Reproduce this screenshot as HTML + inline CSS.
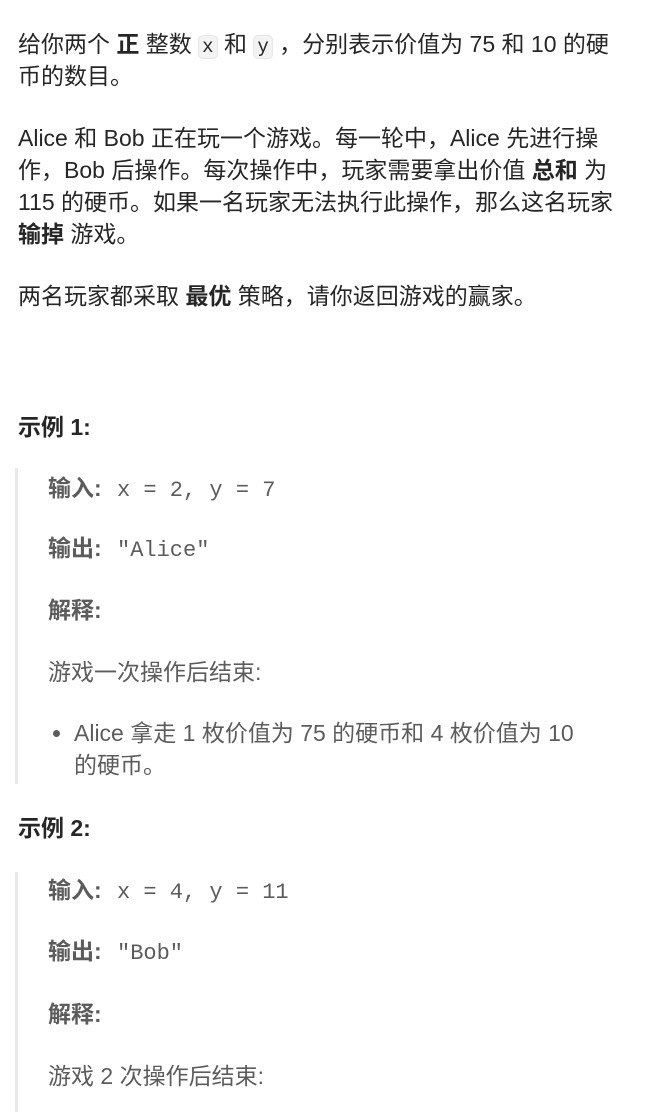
<!DOCTYPE html>
<html><head><meta charset="utf-8"><style>
html,body{margin:0;padding:0;background:#fff;width:648px;height:1112px;overflow:hidden}
body{position:relative;font-family:"Liberation Sans","Noto Sans CJK SC",sans-serif;font-size:23px;color:#262626}
.l{position:absolute;left:18px;line-height:32px;height:32px;white-space:nowrap}
.q{left:48px;color:#5c5c5c}
b{font-weight:700;color:#262626}
.q b{color:#5c5c5c}
.lab{display:inline-block;width:69px}
.m{font-family:"Liberation Mono","DejaVu Sans Mono",monospace;font-size:22px}
code{font-family:"Liberation Mono",monospace;font-size:19px;background:#f3f3f3;border:1px solid #e6e6e6;border-radius:5px;padding:0 3px}
.bar{position:absolute;left:15px;width:3px;background:#e8e8e8}
.dot{position:absolute;left:53px;width:7px;height:7px;border-radius:50%;background:#5c5c5c}
</style></head><body>
<div class="l" style="top:28px">给你两个 <b>正</b> 整数 <code>x</code> 和 <code>y</code> ，分别表示价值为 75 和 10 的硬</div>
<div class="l" style="top:60px">币的数目。</div>
<div class="l" style="top:122px">Alice 和 Bob 正在玩一个游戏。每一轮中，Alice 先进行操</div>
<div class="l" style="top:154px">作，Bob 后操作。每次操作中，玩家需要拿出价值 <b>总和</b> 为</div>
<div class="l" style="top:186px">115 的硬币。如果一名玩家无法执行此操作，那么这名玩家</div>
<div class="l" style="top:218px"><b>输掉</b> 游戏。</div>
<div class="l" style="top:280px">两名玩家都采取 <b>最优</b> 策略，请你返回游戏的赢家。</div>
<div class="l" style="top:411px"><b>示例 1:</b></div>
<div class="bar" style="top:468px;height:316px"></div>
<div class="l q" style="top:472px"><b class="lab">输入:</b><span class="m">x = 2, y = 7</span></div>
<div class="l q" style="top:532px"><b class="lab">输出:</b><span class="m">"Alice"</span></div>
<div class="l q" style="top:594px"><b>解释:</b></div>
<div class="l q" style="top:656px">游戏一次操作后结束:</div>
<div class="dot" style="top:730px"></div>
<div class="l q" style="top:717px;left:74px">Alice 拿走 1 枚价值为 75 的硬币和 4 枚价值为 10</div>
<div class="l q" style="top:749px;left:74px">的硬币。</div>
<div class="l" style="top:812px"><b>示例 2:</b></div>
<div class="bar" style="top:872px;height:240px"></div>
<div class="l q" style="top:874px"><b class="lab">输入:</b><span class="m">x = 4, y = 11</span></div>
<div class="l q" style="top:935px"><b class="lab">输出:</b><span class="m">"Bob"</span></div>
<div class="l q" style="top:998px"><b>解释:</b></div>
<div class="l q" style="top:1060px">游戏 2 次操作后结束:</div>
</body></html>
